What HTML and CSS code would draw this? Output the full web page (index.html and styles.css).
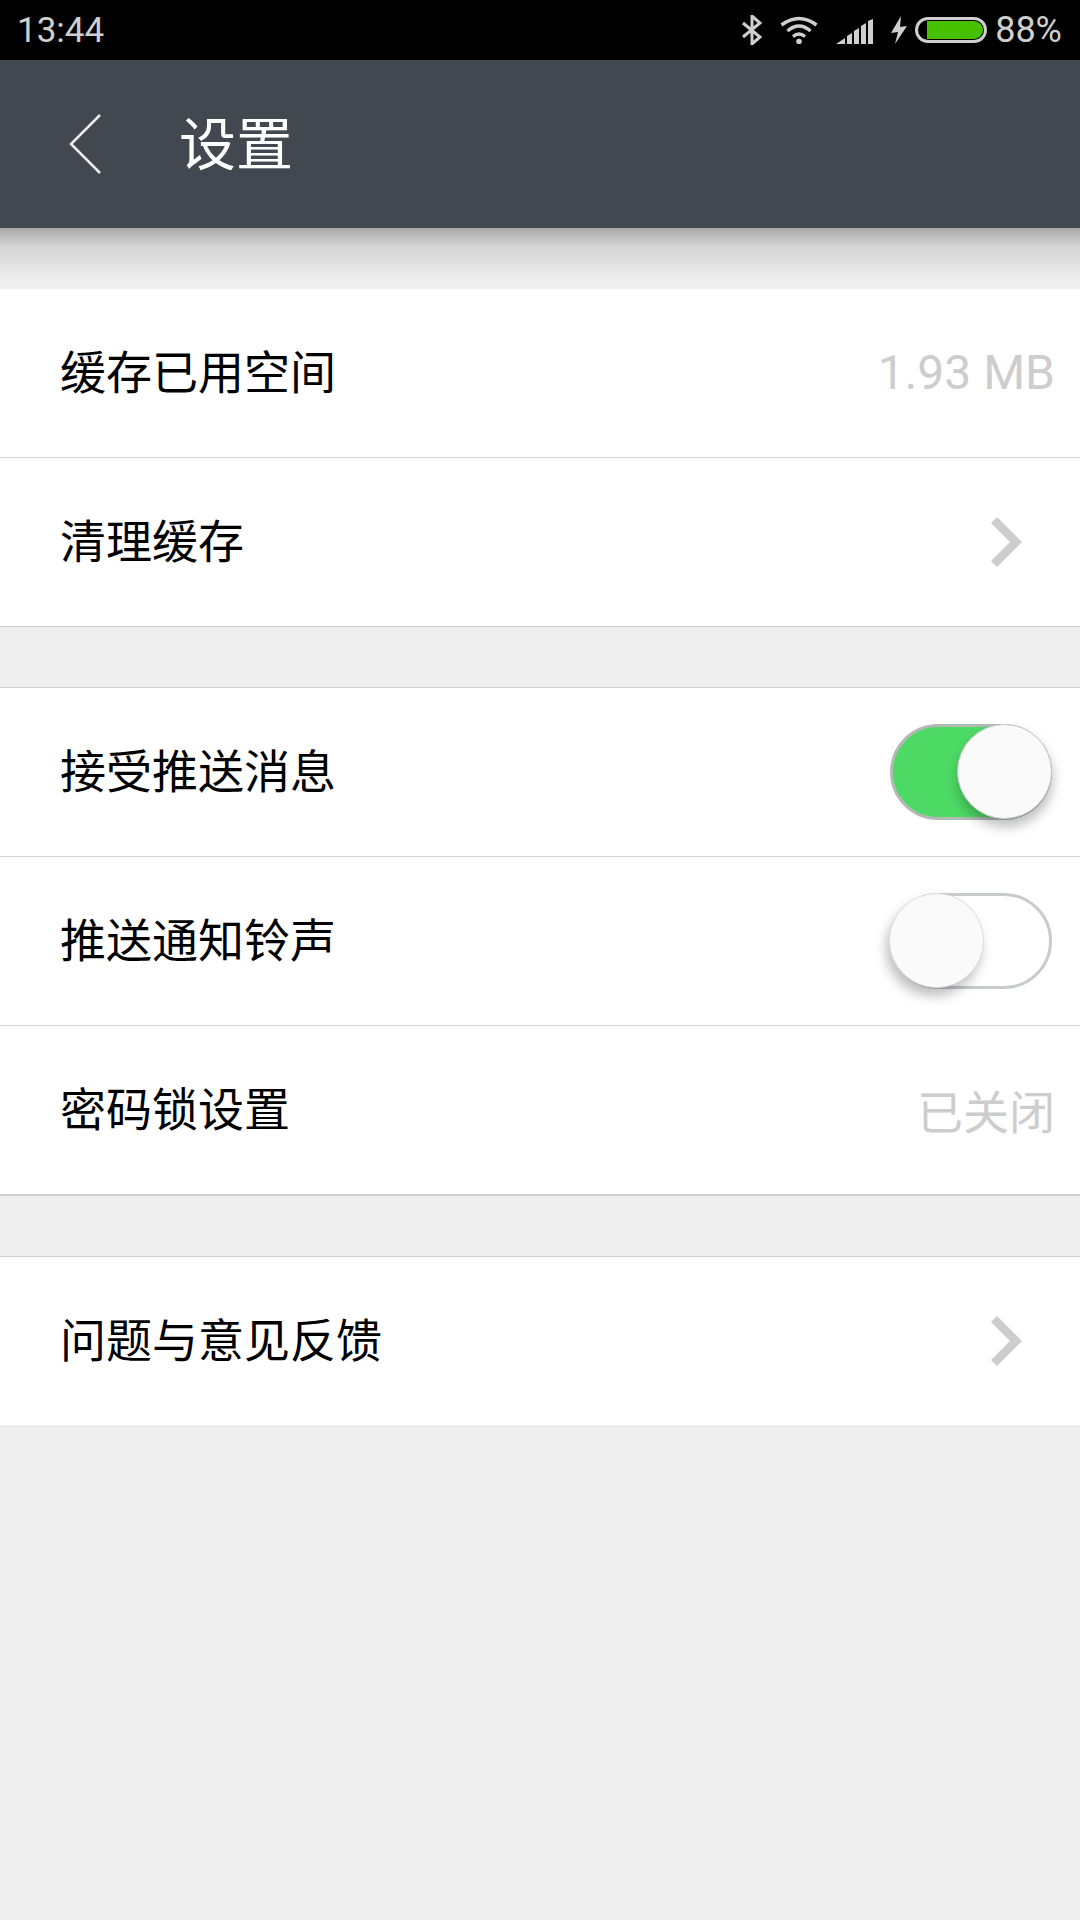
FILE: index.html
```html
<!DOCTYPE html>
<html lang="zh-CN">

<head>
    <meta charset="UTF-8">
    <meta name="viewport" content="width=device-width, initial-scale=1.0">
    <title>设置</title>
    <link rel="stylesheet" href="styles.css">
</head>

<body>
    <div class="status-bar">
        <span class="time">13:44</span>
        <div class="status-icons">
            <svg class="ic-bt" width="20" height="30" viewBox="0 0 20 30">
                <path d="M1 8 L18 22 L10 29 V1 L18 8 L1 22" fill="none" stroke="#cfcfcf" stroke-width="3" />
            </svg>
            <svg class="ic-wifi" width="38" height="28" viewBox="0 0 38 28">
                <path d="M1.500 9 Q19 -4 36.500 9" fill="none" stroke="#cfcfcf" stroke-width="3.500" />
                <path d="M7.500 15 Q19 5 30.500 15" fill="none" stroke="#cfcfcf" stroke-width="3.500" />
                <path d="M13 20.500 Q19 15.500 25 20.500" fill="none" stroke="#cfcfcf" stroke-width="3.500" />
                <circle cx="19" cy="25.500" r="2.800" fill="#cfcfcf" />
            </svg>
            <svg class="ic-signal" width="37" height="25" viewBox="0 0 37 25">
                <path d="M0 25 L9 19 V25 Z M11 25 V17 L16 14 V25 Z M18 25 V12 L23 9 V25 Z M25 25 V7 L30 4 V25 Z M32 25 V2 L37 0 V25 Z" fill="#cfcfcf" />
            </svg>
            <svg class="ic-bolt" width="16" height="28" viewBox="0 0 16 28">
                <path d="M10 0 L0 17 L7 16 L4 28 L16 10 L9 11 Z" fill="#cfcfcf" />
            </svg>
            <div class="battery">
                <div class="battery-fill"></div>
            </div>
            <span class="percent">88%</span>
        </div>
    </div>

    <div class="header">
        <svg class="back" width="36" height="64" viewBox="0 0 36 64">
            <path d="M33 3 L4 32 L33 61" fill="none" stroke="#f0f0f0" stroke-width="2.500" />
        </svg>
        <h1 class="title">设置</h1>
    </div>
    <div class="header-shadow"></div>

    <div class="group group-first">
        <div class="row">
            <span class="label">缓存已用空间</span>
            <span class="value value-num">1.93 MB</span>
        </div>
        <div class="row">
            <span class="label">清理缓存</span>
            <svg class="arrow" width="34" height="52" viewBox="0 0 34 52">
                <path d="M4 4 L26 26 L4 48" fill="none" stroke="#cdcdcd" stroke-width="8.500" />
            </svg>
        </div>
    </div>

    <div class="group group-thick">
        <div class="row">
            <span class="label">接受推送消息</span>
            <div class="switch switch-on">
                <div class="knob"></div>
            </div>
        </div>
        <div class="row">
            <span class="label">推送通知铃声</span>
            <div class="switch">
                <div class="knob"></div>
            </div>
        </div>
        <div class="row">
            <span class="label">密码锁设置</span>
            <span class="value">已关闭</span>
        </div>
    </div>

    <div class="group group-last">
        <div class="row">
            <span class="label">问题与意见反馈</span>
            <svg class="arrow" width="34" height="52" viewBox="0 0 34 52">
                <path d="M4 4 L26 26 L4 48" fill="none" stroke="#cdcdcd" stroke-width="8.500" />
            </svg>
        </div>
    </div>
</body>

</html>
```

FILE: styles.css
```css
* {
    box-sizing: border-box;
}

body {
    margin: 0;
    width: 1080px;
    height: 1920px;
    overflow: hidden;
    background-color: #eeeeee;
    font-family: "Noto Sans CJK SC", "Roboto", sans-serif;
}

.status-bar {
    height: 60px;
    background-color: #000;
    color: #cfcfcf;
    display: flex;
    justify-content: space-between;
    align-items: center;
    padding: 0 18px 0 17px;
}

.time {
    font-family: "Roboto", sans-serif;
    font-size: 35px;
}

.percent {
    font-family: "Roboto", sans-serif;
    font-size: 36px;
}

.status-icons {
    display: flex;
    align-items: center;
}

.ic-bt,
.ic-wifi {
    margin-right: 18px;
}

.ic-signal {
    margin-top: 2px;
    margin-right: 18px;
}

.ic-bolt {
    margin-right: 8px;
}

.battery {
    width: 72px;
    height: 26px;
    border: 3px solid #cfcfcf;
    border-radius: 13px;
    padding: 1px 1px 1px 9px;
    margin-right: 8px;
}

.battery-fill {
    height: 100%;
    background-color: #46c000;
    border-radius: 0 9px 9px 0;
}

.header {
    height: 168px;
    background-color: #414850;
    display: flex;
    align-items: center;
    padding-left: 67px;
}

.back {
    margin-right: 76px;
}

.title {
    margin: 0 0 8px;
    color: #fff;
    font-size: 57px;
    font-weight: 400;
}

.header-shadow {
    height: 61px;
    background: linear-gradient(#a8a8a8, #d4d4d4 30%, #eeeeee 85%);
}

.group {
    background-color: #fff;
    margin-top: 60px;
    border-top: 1px solid #cfcfcf;
    border-bottom: 1px solid #cfcfcf;
}

.group-first {
    margin-top: 0;
    border-top: none;
}

.group-thick {
    border-bottom-width: 2px;
}

.group-last {
    border-bottom: none;
}

.row {
    height: 169px;
    border-bottom: 1px solid #d4d4d4;
    display: flex;
    justify-content: space-between;
    align-items: center;
    padding: 0 25px 0 60px;
}

.row:last-child {
    height: 168px;
    border-bottom: none;
}

.label {
    margin-bottom: 8px;
    font-size: 46px;
    color: #000;
}

.value {
    margin-bottom: 2px;
    font-size: 46px;
    color: #cdcdcd;
}

.value-num {
    font-family: "Roboto", sans-serif;
    font-size: 48px;
}

.arrow {
    margin-right: 31px;
    filter: blur(0.4px);
}

.switch {
    position: relative;
    width: 162px;
    height: 96px;
    margin-right: 3px;
    border: 3px solid #c8cacd;
    border-radius: 48px;
    background-color: #fff;
    filter: blur(0.5px);
}

.switch-on {
    background-color: #4cd964;
    border-color: #b2bab4;
}

.knob {
    position: absolute;
    top: -3px;
    left: -4px;
    width: 95px;
    height: 95px;
    border-radius: 50%;
    background-color: #fafafa;
    border: 1px solid #dcdcdc;
    box-shadow: -3px 8px 12px rgba(0, 0, 0, 0.25);
}

.switch-on .knob {
    left: auto;
    right: -3px;
    border-color: #c8c8c8;
    box-shadow: 1px 8px 12px rgba(0, 0, 0, 0.25);
}
```
